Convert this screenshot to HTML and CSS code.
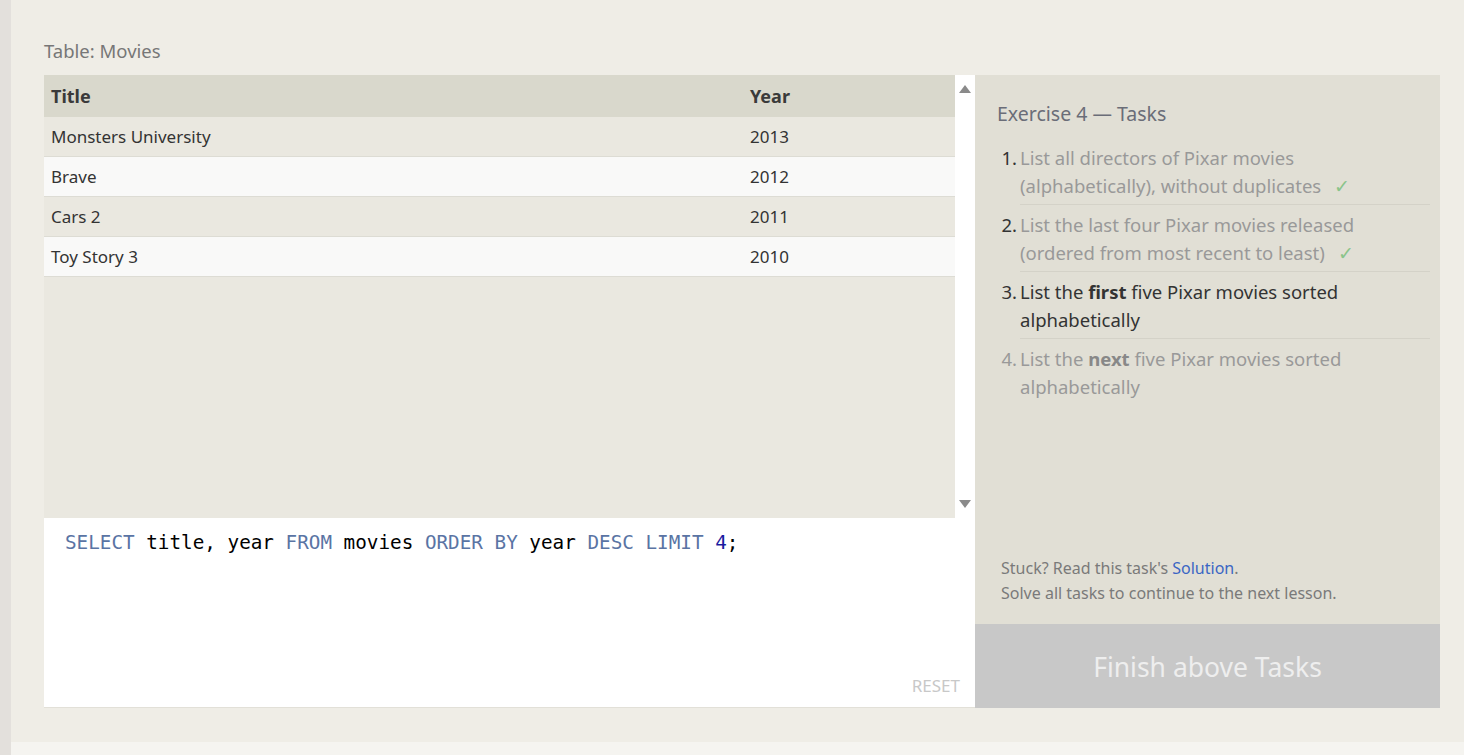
FILE: index.html
```html
<!DOCTYPE html>
<html>
<head>
<meta charset="utf-8">
<link rel="stylesheet" href="styles.css">
</head>
<body>
<div class="strip"></div>
<div class="main">
  <div class="table-label">Table: Movies</div>
  <div class="workspace">
    <div class="left">
      <div class="results">
        <div class="table-wrap">
          <table class="grid">
            <thead>
              <tr><th class="c-title">Title</th><th class="c-year">Year</th></tr>
            </thead>
            <tbody>
              <tr class="odd"><td>Monsters University</td><td>2013</td></tr>
              <tr class="even"><td>Brave</td><td>2012</td></tr>
              <tr class="odd"><td>Cars 2</td><td>2011</td></tr>
              <tr class="even"><td>Toy Story 3</td><td>2010</td></tr>
            </tbody>
          </table>
        </div>
        <div class="scrollbar">
          <span class="arrow up"></span>
          <span class="arrow down"></span>
        </div>
      </div>
      <div class="editor">
        <div class="code"><span class="kw">SELECT</span> title, year <span class="kw">FROM</span> movies <span class="kw">ORDER BY</span> year <span class="kw">DESC</span> <span class="kw">LIMIT</span> <span class="num">4</span>;</div>
        <div class="reset">RESET</div>
      </div>
    </div>
    <div class="tasks">
      <div class="tasks-body">
        <div class="tasks-title">Exercise 4 — Tasks</div>
        <ol class="task-list">
          <li class="done"><span class="n">1.</span><span class="t">List all directors of Pixar movies (alphabetically), without duplicates <span class="check">✓</span></span></li>
          <li class="done"><span class="n">2.</span><span class="t">List the last four Pixar movies released (ordered from most recent to least) <span class="check">✓</span></span></li>
          <li class="current"><span class="n">3.</span><span class="t">List the <b>first</b> five Pixar movies sorted alphabetically</span></li>
          <li class="todo"><span class="n">4.</span><span class="t">List the <b>next</b> five Pixar movies sorted alphabetically</span></li>
        </ol>
      </div>
      <div class="hint">
        <div>Stuck? Read this task's <a class="link">Solution</a>.</div>
        <div>Solve all tasks to continue to the next lesson.</div>
      </div>
      <div class="finish">Finish above Tasks</div>
    </div>
  </div>
</div>
</body>
</html>
```

FILE: styles.css
```css
* { box-sizing: border-box; }
html, body { margin: 0; padding: 0; }
body {
  display: flex;
  height: 755px;
  background: #f5f4f0;
  font-family: "Noto Sans", "Open Sans", sans-serif;
  overflow: hidden;
}
.strip {
  width: 11px;
  height: 755px;
  background: #e3e0dc;
  flex: none;
}
.main {
  flex: 1;
  height: 742px;
  background: #efede6;
  padding: 38px 24px 0 33px;
}
.table-label {
  font-size: 18.5px;
  color: #777;
  line-height: 26px;
  height: 37px;
}
.workspace {
  display: flex;
  height: 633px;
}
.left {
  width: 931px;
  display: flex;
  flex-direction: column;
}
.results {
  height: 443px;
  display: flex;
}
.table-wrap {
  width: 911px;
  background: #eae8e0;
}
.grid {
  width: 100%;
  border-collapse: separate;
  border-spacing: 0;
  font-size: 17px;
  color: #333;
}
.grid th {
  text-align: left;
  background: #d9d8cc;
  height: 42px;
  font-weight: bold;
  font-size: 18px;
  padding: 0 7px;
  color: #3a3a3a;
}
.grid td {
  height: 40px;
  padding: 0 7px;
  border-bottom: 1px solid #dddcd4;
}
.grid .c-year { width: 212px; }
.odd td { background: #eae8e0; }
.even td { background: #f9f9f8; }
.scrollbar {
  width: 20px;
  background: #fff;
  position: relative;
}
.arrow {
  position: absolute;
  left: 4px;
  width: 0;
  height: 0;
  border-left: 6px solid transparent;
  border-right: 6px solid transparent;
}
.arrow.up { top: 10px; border-bottom: 8px solid #8a8a8a; }
.arrow.down { bottom: 10px; border-top: 8px solid #8a8a8a; }
.editor {
  height: 190px;
  background: #fff;
  border-bottom: 1px solid #e2e0d8;
  padding: 12px 21px 0 21px;
  display: flex;
  flex-direction: column;
}
.code {
  font-family: "DejaVu Sans Mono", "Liberation Mono", monospace;
  font-size: 19.3px;
  line-height: 26px;
  color: #000;
  flex: 1;
}
.kw { color: #5a74a4; }
.num { color: #1a1aa0; }
.reset {
  align-self: flex-end;
  font-size: 17px;
  color: #c8c8c8;
  line-height: 20px;
  margin: 0 -6px 11px 0;
}
.tasks {
  width: 465px;
  background: #e1dfd5;
  display: flex;
  flex-direction: column;
}
.tasks-body {
  flex: 1;
  padding: 25px 10px 0 22px;
}
.tasks-title {
  font-size: 19.5px;
  color: #6a6d78;
  line-height: 28px;
  margin-bottom: 16px;
}
.task-list {
  list-style: none;
  margin: 0;
  padding: 0;
  font-size: 18.5px;
  line-height: 28px;
}
.task-list li {
  display: flex;
}
.task-list .n {
  width: 23px;
  text-align: right;
  padding-right: 3px;
  color: #333;
  flex: none;
}
.task-list .t {
  flex: 1;
  padding-bottom: 4px;
  border-bottom: 1px solid #d4d2c8;
  margin-bottom: 6px;
}
.task-list li:last-child .t { border-bottom: none; }
.done .t, .todo .t { color: #999; }
.todo .n { color: #999; }
.current .t { color: #333; }
.done b, .todo b { color: #888; }
.check { color: #8ac48a; margin-left: 8px; }
.hint {
  padding: 0 0 18px 26px;
  font-size: 16px;
  line-height: 25px;
  color: #7a7a7a;
}
.link { color: #3a66c4; }
.finish {
  height: 84px;
  background: #c8c8c8;
  color: #eeeeee;
  font-size: 26.5px;
  display: flex;
  align-items: center;
  justify-content: center;
  padding-top: 2px;
}
```
